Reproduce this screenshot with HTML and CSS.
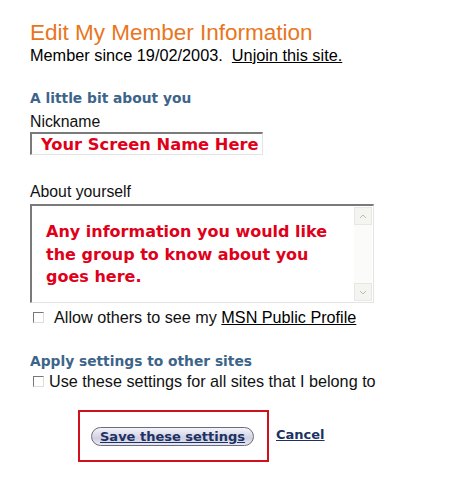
FILE: index.html
```html
<!DOCTYPE html>
<html>
<head>
<meta charset="utf-8">
<link rel="stylesheet" href="styles.css">
</head>
<body>
<div class="page">
  <h1 class="title">Edit My Member Information</h1>
  <div class="since">Member since 19/02/2003.&nbsp; <a class="ulink" href="#">Unjoin this site.</a></div>

  <h2 class="sect first">A little bit about you</h2>
  <div class="label nickl">Nickname</div>
  <div class="input"><span class="nick">Your Screen Name Here</span></div>

  <div class="label about">About yourself</div>
  <div class="textarea">
    <div class="ta-text">Any information you would like the group to know about you goes here.</div>
    <div class="scroll">
      <div class="sbtn"><svg width="8" height="5" viewBox="0 0 8 5"><path d="M1 4 L4 1 L7 4" fill="none" stroke="#b8bcb0" stroke-width="1"/></svg></div>
      <div class="strack"></div>
      <div class="sbtn"><svg width="8" height="5" viewBox="0 0 8 5"><path d="M1 1 L4 4 L7 1" fill="none" stroke="#b8bcb0" stroke-width="1"/></svg></div>
    </div>
  </div>
  <div class="check allow"><span class="box"></span><span class="ctext">Allow others to see my <a class="ulink" href="#">MSN Public Profile</a></span></div>

  <h2 class="sect apply">Apply settings to other sites</h2>
  <div class="check use"><span class="box"></span><span class="ctext">Use these settings for all sites that I belong to</span></div>

  <div class="actions">
    <div class="redbox"><span class="btn">Save these settings</span></div>
    <a class="cancel" href="#">Cancel</a>
  </div>
</div>
</body>
</html>
```
FILE: styles.css
```css
html, body { margin: 0; padding: 0; background: #fff; }
.page { padding: 19px 0 0 30px; font-family: "Liberation Sans", Arial, sans-serif; color: #000; }
.title { margin: 0; font-weight: normal; font-size: 22.5px; line-height: 28px; color: #e8761e; }
.since { font-size: 16.3px; line-height: 17px; }
.ulink { color: #000; text-decoration: underline; }
.sect { margin: 0; font-family: "DejaVu Sans", Verdana, sans-serif; font-weight: bold; font-size: 13.8px; line-height: 18px; color: #3d6489; }
.sect.first { margin-top: 25px; }
.label { font-size: 15.8px; line-height: 18px; color: #111; margin-top: 2px; }
.label.nickl { margin-top: 6px; }
.label.about { margin-top: 28px; }
.input { margin-top: 1px; width: 221px; height: 20px; border-top: 2px solid #7a7a7a; border-left: 2px solid #7a7a7a; border-right: 1px solid #e4e4e4; border-bottom: 1px solid #e4e4e4; box-sizing: content-box; display: flex; align-items: center; padding-left: 9px; }
.nick { font-family: "DejaVu Sans", Verdana, sans-serif; font-weight: bold; color: #e0001a; font-size: 16.3px; white-space: nowrap; }
.textarea { margin-top: 3px; width: 344px; height: 99px; box-sizing: border-box; border-top: 2px solid #7a7a7a; border-left: 2px solid #7a7a7a; border-right: 1px solid #e4e4e4; border-bottom: 1px solid #e4e4e4; display: flex; }
.ta-text { flex: 1; padding: 15px 10px 0 14px; font-family: "DejaVu Sans", Verdana, sans-serif; font-weight: bold; color: #e0001a; font-size: 16px; line-height: 22.5px; }
.scroll { width: 18px; display: flex; flex-direction: column; padding: 1px 1px 1px 0; }
.sbtn { height: 16px; border: 1px solid #e8e8e2; background: #f4f4f0; display: flex; align-items: center; justify-content: center; }
.strack { flex: 1; background: #fbfbf9; }
.check { display: flex; align-items: center; font-size: 16.2px; line-height: 17px; color: #111; }
.check .box { width: 9px; height: 9px; border-top: 1px solid #777; border-left: 1px solid #777; border-right: 1px solid #ddd; border-bottom: 1px solid #ddd; margin-left: 3px; flex: none; }
.allow { margin-top: 6px; }
.allow .ctext { margin-left: 10px; }
.apply { margin-top: 26px; }
.use { margin-top: 3px; }
.use .ctext { margin-left: 5px; }
.actions { display: flex; align-items: center; margin-top: 20px; margin-left: 48px; }
.redbox { width: 176px; height: 48px; border: 2px solid #d0101a; display: flex; align-items: center; padding-left: 11px; box-sizing: content-box; }
.btn { display: inline-block; height: 17px; padding: 0 8px; border: 1px solid #6c6c7c; border-radius: 10px; background: linear-gradient(#f4f4fa, #cfcfe2 60%, #e8e8f4); font-family: "DejaVu Sans", Verdana, sans-serif; font-weight: bold; font-size: 13px; line-height: 17px; color: #1b3262; text-decoration: underline; white-space: nowrap; }
.cancel { margin-left: 7px; margin-top: -4px; font-family: "DejaVu Sans", Verdana, sans-serif; font-weight: bold; font-size: 13px; color: #1b3262; text-decoration: underline; }
```
